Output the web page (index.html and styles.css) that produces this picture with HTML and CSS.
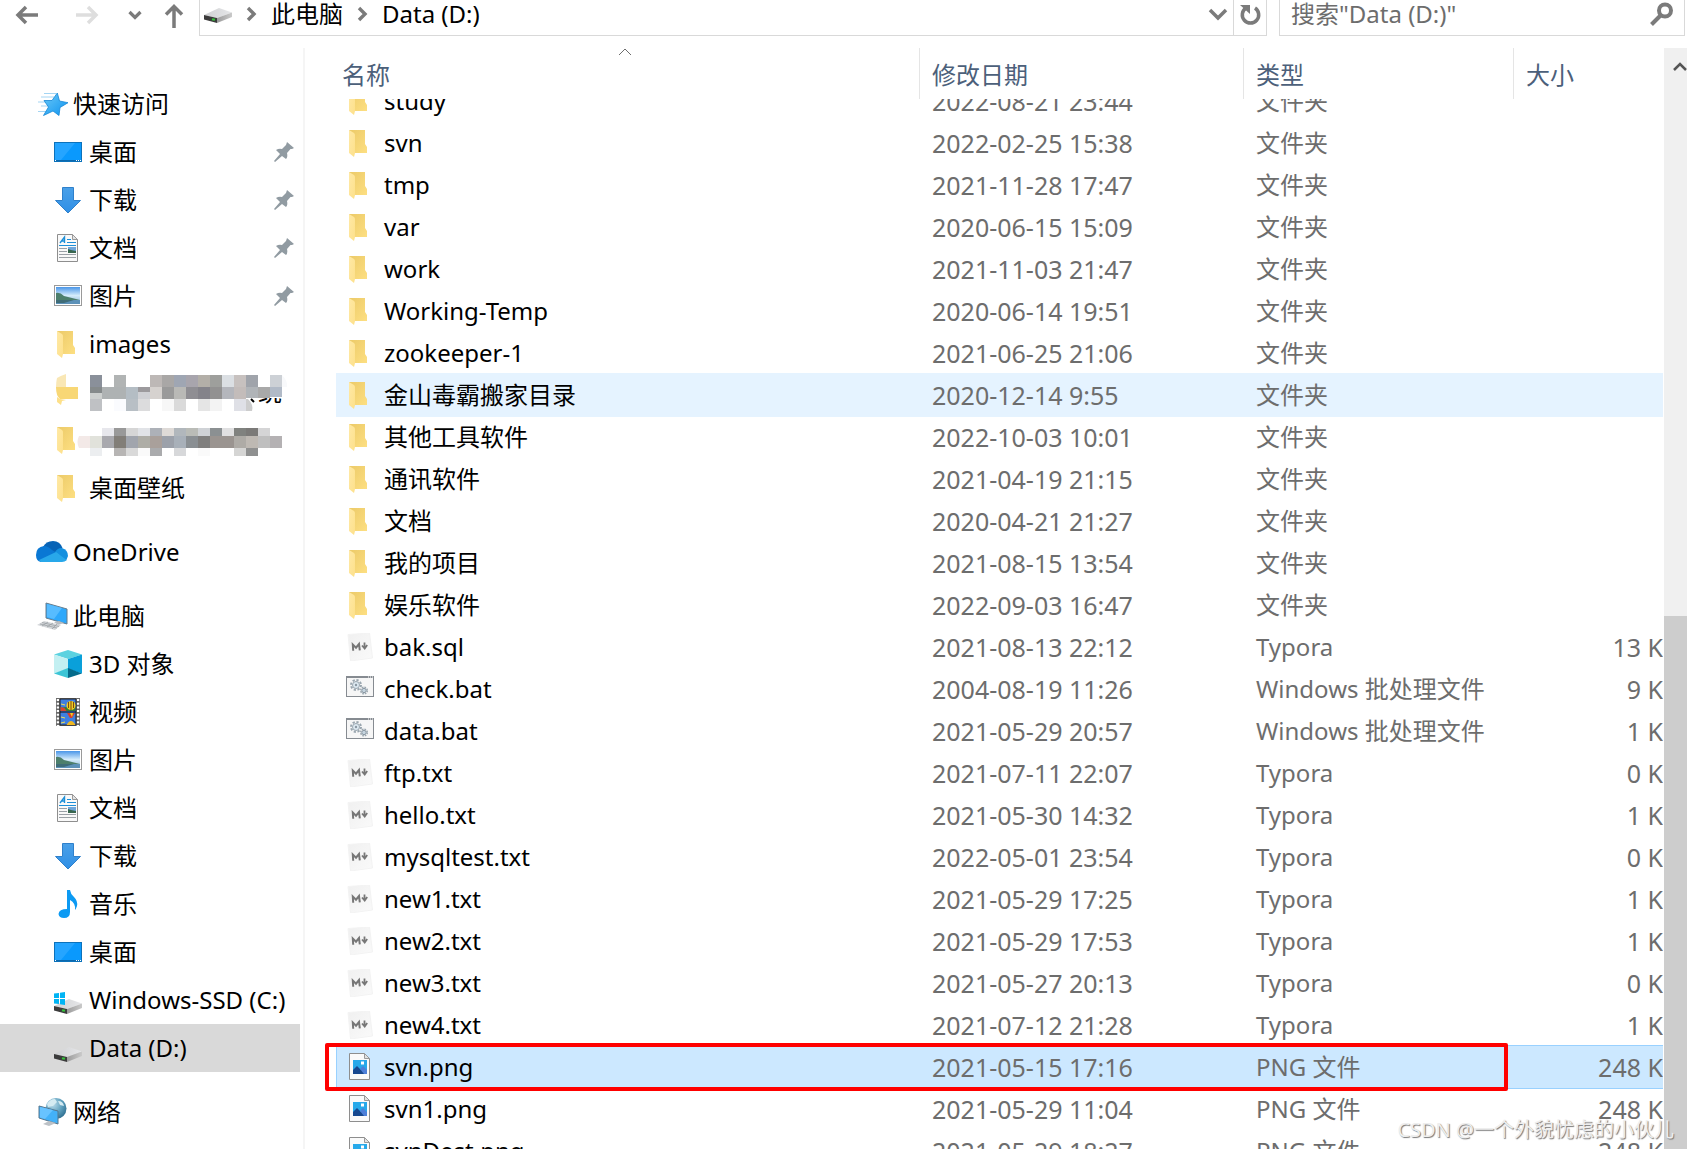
FILE: index.html
```html
<!DOCTYPE html>
<html lang="zh-CN">
  <head>
    <meta charset="UTF-8" />
    <meta name="viewport" content="width=device-width, initial-scale=1.0" />
    <title>Data (D:)</title>
    <link rel="stylesheet" href="styles.css">
  </head>
  <body>
    <svg class="sprite" width="0" height="0" aria-hidden="true">
      <defs>
        <linearGradient id="g-back" x1="0" y1="0" x2="1" y2="1"><stop offset="0" stop-color="#ecca68" /><stop offset="1" stop-color="#fddf82" /></linearGradient>
        <linearGradient id="g-flap" x1="0" y1="0" x2="1" y2="1"><stop offset="0" stop-color="#ffe9a6" /><stop offset="1" stop-color="#fde08a" /></linearGradient>
        <linearGradient id="g-sky" x1="0" y1="0" x2="0" y2="1"><stop offset="0" stop-color="#4a96e8" /><stop offset="0.5" stop-color="#d5ecfb" /><stop offset="1" stop-color="#8fb6d6" /></linearGradient>
        <linearGradient id="g-arrow" x1="0" y1="0" x2="0" y2="1"><stop offset="0" stop-color="#4aa0e8" /><stop offset="1" stop-color="#2f8fe6" /></linearGradient>
        <linearGradient id="g-star" x1="0" y1="0" x2="1" y2="1"><stop offset="0" stop-color="#6cc9f7" /><stop offset="1" stop-color="#0c93f0" /></linearGradient>
        <linearGradient id="g-top" x1="0" y1="0" x2="1" y2="0"><stop offset="0" stop-color="#cfd0d2" /><stop offset="1" stop-color="#e6e7e9" /></linearGradient>
        <linearGradient id="g-side" x1="0" y1="0" x2="1" y2="0"><stop offset="0" stop-color="#9b9b9b" /><stop offset="1" stop-color="#cacaca" /></linearGradient>
        <linearGradient id="g-paper" x1="0" y1="0" x2="1" y2="1"><stop offset="0" stop-color="#f0f0f0" /><stop offset="1" stop-color="#fafafa" /></linearGradient>
        <radialGradient id="g-globe" cx="0.35" cy="0.3" r="0.75"><stop offset="0" stop-color="#b9dbea" /><stop offset="0.6" stop-color="#5d9fbd" /><stop offset="1" stop-color="#2f6f91" /></radialGradient>
      </defs>
      <symbol id="folder" viewBox="0 0 28 28">
        <path d="M3 1h16v14l2 3v6H8z" fill="url(#g-back)" />
        <path d="M3 1l5 3q1 1 1 2v18l-1 4-5-4z" fill="url(#g-flap)" />
      </symbol>
      <symbol id="markdown" viewBox="0 0 28 28">
        <path d="M2 1.500L23.500 0l3 25-22 3z" fill="url(#g-paper)" stroke="#f3f3f3" />
        <path d="M7.200 17.800L6.800 11.500l3.200 3.200 3-3.700.8 6.300" fill="none" stroke="#777" stroke-width="2" />
        <path d="M18.500 9.500v6M16 12.500l2.700 3 2.500-3.500" fill="none" stroke="#777" stroke-width="1.800" />
      </symbol>
      <symbol id="batch" viewBox="0 0 28 28">
        <rect x="0.500" y="1.500" width="27" height="20" fill="#f6f6f6" stroke="#868b91" />
        <path d="M0 2h28" stroke="#868b91" stroke-width="2" />
        <path d="M22 2h1M24 2h1M26 2h1" stroke="#fff" />
        <circle cx="10" cy="10" r="5" fill="none" stroke="#9aa6af" stroke-width="2" stroke-dasharray="2.200 1.700" />
        <circle cx="10" cy="10" r="3.500" fill="#dde9f1" stroke="#9aa6af" />
        <circle cx="10" cy="10" r="1.200" fill="#8b98a3" />
        <circle cx="18" cy="15.500" r="3.300" fill="none" stroke="#9aa6af" stroke-width="1.500" stroke-dasharray="1.600 1" />
        <circle cx="18" cy="15.500" r="2.200" fill="#c5d4df" stroke="#8b98a3" />
      </symbol>
      <symbol id="image-file" viewBox="0 0 28 28">
        <path d="M3.500.5h15l5 5v21h-20z" fill="#fafafa" stroke="#8e8e8e" />
        <path d="M18.500.5v5h5z" fill="#e2e2e2" stroke="#9a9a9a" />
        <rect x="7" y="7" width="14" height="14" fill="#27a9ea" />
        <path d="M7 17l4-4 4 4 2-2 4 3v3H7z" fill="#17488f" />
        <path d="M14 16l3-3 4 4v4h-3z" fill="#4d7fd8" />
        <rect x="15" y="8.500" width="3" height="3" fill="#fff" />
      </symbol>
      <symbol id="desktop" viewBox="0 0 28 28">
        <rect x="0.500" y="4.500" width="27" height="19" fill="#0a99fd" stroke="#0c72bb" />
        <path d="M1 5h20L7 22H1z" fill="#25a5ff" />
        <path d="M1 22.500h26" stroke="#0c68ad" />
        <path d="M1 22.500h1M22 22.500h1M24 22.500h1M26 22.500h1" stroke="#fff" />
      </symbol>
      <symbol id="download" viewBox="0 0 28 28">
        <path d="M8.500 1.500h11v13h7L14 27 1.500 14.500h7z" fill="url(#g-arrow)" stroke="#2f80cb" />
      </symbol>
      <symbol id="document" viewBox="0 0 28 28">
        <path d="M3.500.5h15l5 5v22h-20z" fill="#f9f9f9" stroke="#8e8e8e" />
        <path d="M18.500.5v5h5z" fill="#e4e4e4" stroke="#9a9a9a" />
        <path d="M6 9l4.500-6v6M7.500 7H11" fill="none" stroke="#1d8fd8" stroke-width="1.400" />
        <path d="M13 5.500h4M13 8.500h9M5 11.500h17" stroke="#1d8fd8" />
        <path d="M5 14.500h8M5 17.500h8M5 20.500h17M5 23.500h17" stroke="#9aa0a6" />
        <rect x="14" y="13" width="8" height="6" fill="#6fa6da" />
        <path d="M14 15l3 1 5 1v2h-8z" fill="#38664f" />
      </symbol>
      <symbol id="picture" viewBox="0 0 28 28">
        <rect x="0.500" y="3.500" width="27" height="20" fill="#fff" stroke="#9a9a9a" />
        <rect x="2" y="5" width="24" height="17" fill="url(#g-sky)" />
        <path d="M2 11q4-1 8 3 8 2 16 4H2z" fill="#4d7f6c" />
        <path d="M2 18h24v4H2z" fill="#5c91b8" />
        <path d="M2 18h18l-10 3H2z" fill="#3f6c78" />
      </symbol>
      <symbol id="cube" viewBox="0 0 28 28">
        <path d="M0 4.500L14 0l14 4.500L14 9z" fill="#5bd2e0" />
        <path d="M0 4.500L14 9v10L0 23.500z" fill="#c3f0f2" />
        <path d="M28 4.500L14 9v10l14 4.500z" fill="#0aa0da" />
        <path d="M0 23.500L14 18v10z" fill="#3cc5d6" />
        <path d="M28 23.500L14 18v10z" fill="#046b8b" />
      </symbol>
      <symbol id="video" viewBox="0 0 28 28">
        <path d="M2 0h24v28H2z" fill="#6b6b6b" />
        <path d="M4 1v27M24 1v27" stroke="#fff" stroke-width="2.400" stroke-dasharray="2 1.700" />
        <path d="M6 1h16v26H6z" fill="#3f7fe0" stroke="#222" />
        <path d="M6.500 10l5-1 4 1 6-2v5h-15z" fill="#347c36" />
        <path d="M6.500 9l4 1 2 3h-6z" fill="#d9452c" />
        <path d="M6 14h16" stroke="#111" />
        <ellipse cx="17" cy="7.500" rx="4.500" ry="4.500" fill="#f0cd21" />
        <path d="M17 3v9M14.500 4v6M19.500 4v6" stroke="#7d4b12" />
        <path d="M13 15h8l-3 5h-2z" fill="#d7402a" />
        <path d="M16 15h3l-1 4z" fill="#f0cd21" />
        <path d="M12.500 27q4.500-8 9 0z" fill="#f0b821" />
        <path d="M7 6l4 1M7 19l4 1M7 25l4-1" stroke="#f5e050" />
      </symbol>
      <symbol id="music" viewBox="0 0 28 28">
        <path d="M13 0h3q.5 4 4 7 4 4 3 9-1 3-2 4 .8-7-5-10v12q0 6-6 6-5 0-5.500-4 .5-5 8.500-5z" fill="#0c9af3" />
      </symbol>
      <symbol id="drive" viewBox="0 0 28 28">
        <path d="M0 20l15-7 13 4.500L13 23z" fill="url(#g-top)" />
        <path d="M13 23l15-5.500V22L13 28z" fill="url(#g-side)" />
        <path d="M0 20l13 3v5L0 24.500z" fill="#3b3b3b" />
        <path d="M8 24.200l3 .6" stroke="#35c53b" stroke-width="2" />
      </symbol>
      <symbol id="system-drive" viewBox="0 0 28 28">
        <use href="#drive" />
        <path d="M0 7.500l5-.6v5H0zM6 6.800L11 6v6H6zM0 13h5v5l-5-.6zM6 13h5v6l-5-.8z" fill="#00b4f4" />
      </symbol>
      <symbol id="star" viewBox="0 0 32 28">
        <path d="M8 3.500h12M5 7h13M2 12h8M5 16h7M2 21.500h9" stroke="#a4d5f3" />
        <path d="M21.300 3l2.200 8 8.500 1.700-8 4.800-1 8-6-4.500-9.500 4.500 5-8.500L8 10.500h8z" fill="url(#g-star)" stroke="#1486d6" stroke-width="0.800" />
      </symbol>
      <symbol id="cloud" viewBox="0 0 32 28">
        <path d="M7 9q3-6 10-6 7 0 9.500 7L16 18 6 12z" fill="#0763b6" />
        <path d="M0 17q0-8 8-9 4 0 8 4l5 3L5 24q-5-1-5-7z" fill="#0a78d4" />
        <path d="M19 14q3-4.500 7-4 6 2 6 8l-2 5z" fill="#1490df" />
        <path d="M3 22l17-8 10.500 8q-1.500 2-4.500 2H6q-2 0-3-2z" fill="#28a8ea" />
      </symbol>
      <symbol id="computer" viewBox="0 0 32 28">
        <path d="M10 1l21 6v15l-21-6z" fill="#2ea8fb" stroke="#697d8c" />
        <path d="M11 2l15 4-8 11-7-2z" fill="#57bcff" />
        <path d="M18 20l5-1 5 2-6 2z" fill="#b8bdc2" />
        <path d="M8 19l17 4-6 5-18-5z" fill="#d3d6d9" />
        <path d="M6 20.500l17 4M4 22l17 4M12 20l-6 4M17 21l-6 4M21 22l-5 5" stroke="#959b9f" stroke-width="0.700" />
      </symbol>
      <symbol id="network" viewBox="0 0 32 28">
        <circle cx="20" cy="10.500" r="10.500" fill="url(#g-globe)" />
        <path d="M11 6q3-5 8-5l2 3-4 4-5 1zM22 3q5 0 6 5l-4-1z" fill="#d5ebf2" />
        <path d="M3 8l19 5v13L3 20z" fill="#43b1f8" stroke="#56768d" />
        <path d="M4 9l13 3-8 9-5-1.500z" fill="#68c3ff" />
        <path d="M7 26l6-3 7 2-7 3z" fill="#bcc1c6" />
      </symbol>
      <symbol id="pin" viewBox="0 0 20 20">
        <path d="M13 0l7 6-2 1-1.500 0-3.500 4q1 4-1 6l-4-3-7 6-1-1 6-7-4-4q3-2 6-1l4-4z" fill="#919ba2" />
      </symbol>
      <symbol id="chevron" viewBox="0 0 12 16">
        <path d="M3 2l6 6-6 6" fill="none" stroke="#7b7b7b" stroke-width="3.400" />
      </symbol>
    </svg>

    <header class="toolbar">
      <nav class="history" aria-label="导航">
        <button class="history__button" aria-label="后退"><svg width="24" height="24"><path d="M23 12H3M11 4l-8 8 8 8" fill="none" stroke="#7b7b7b" stroke-width="3.500" /></svg></button>
        <button class="history__button" aria-label="前进"><svg width="24" height="24"><path d="M1 12h20M13 4l8 8-8 8" fill="none" stroke="#dedede" stroke-width="3.500" /></svg></button>
        <button class="history__button history__button_small" aria-label="最近"><svg width="14" height="24"><path d="M1.500 9l5.500 5.500L12.500 9" fill="none" stroke="#7b7b7b" stroke-width="3.200" /></svg></button>
        <button class="history__button" aria-label="上移"><svg width="24" height="26"><path d="M12 26V5M4 12.500L12 4.500l8 8" fill="none" stroke="#7b7b7b" stroke-width="3.500" /></svg></button>
      </nav>
      <div class="address">
        <svg class="icon"><use href="#drive" y="-5" /></svg>
        <svg class="crumb-arrow"><use href="#chevron" /></svg>
        <a class="crumb" href="#">此电脑</a>
        <svg class="crumb-arrow"><use href="#chevron" /></svg>
        <a class="crumb" href="#">Data (D:)</a>
        <button class="address__drop" aria-label="历史地址"><svg width="20" height="14"><path d="M2 3l8 8 8-8" fill="none" stroke="#7b7b7b" stroke-width="3.500" /></svg></button>
        <button class="address__refresh" aria-label="刷新"><svg width="24" height="24"><path d="M17 5a8.200 8.200 0 1 1-9 0" fill="none" stroke="#7b7b7b" stroke-width="3.500" /><path d="M2 2h10v9z" fill="#7b7b7b" /></svg></button>
      </div>
      <div class="search">
        <input class="search__input" type="search" aria-label="搜索" placeholder='搜索"Data (D:)"'>
        <svg width="24" height="24"><circle cx="16" cy="8.500" r="6" fill="none" stroke="#7b7b7b" stroke-width="4" /><path d="M12 13l-9.500 9.500" stroke="#7b7b7b" stroke-width="4" /></svg>
      </div>
    </header>

    <main>
      <aside class="sidebar">
        <ul class="tree">
          <li><a class="tree__item tree__item_root" href="#"><svg class="icon"><use href="#star" /></svg>快速访问</a></li>
          <li><a class="tree__item" href="#"><svg class="icon"><use href="#desktop" /></svg>桌面<svg class="pin"><use href="#pin" /></svg></a></li>
          <li><a class="tree__item" href="#"><svg class="icon"><use href="#download" /></svg>下载<svg class="pin"><use href="#pin" /></svg></a></li>
          <li><a class="tree__item" href="#"><svg class="icon"><use href="#document" /></svg>文档<svg class="pin"><use href="#pin" /></svg></a></li>
          <li><a class="tree__item" href="#"><svg class="icon"><use href="#picture" /></svg>图片<svg class="pin"><use href="#pin" /></svg></a></li>
          <li><a class="tree__item" href="#"><svg class="icon"><use href="#folder" /></svg>images</a></li>
          <li>
            <a class="tree__item tree__item_masked" href="#">
              <svg class="icon"><path d="M3 0q3-2 9-4V9H2q0-5 1-9z" fill="#f9e7b5" /><path d="M2 9h22v12H6q-4-3-4-12z" fill="#f8d775" /><path d="M3 19l3 2 6 1-4 1-1 4-4-3z" fill="#fde08a" /></svg>
              <span class="tail">统</span>
              <svg class="mosaic" width="216" height="36">
                <path d="M0 0h192v23H0zM0 20h160v16H0z" fill="#fff" />
                <path d="M0 0h12v12H0z" fill="#8a909a" /><path d="M24 0h12v12H24z" fill="#b1b4b4" /><path d="M60 0h12v12H60z" fill="#bdb8b6" /><path d="M72 0h12v12H72z" fill="#a9a7a6" />
                <path d="M84 0h12v12H84z" fill="#9fa6b3" /><path d="M96 0h12v12H96z" fill="#a8a5ad" /><path d="M108 0h12v12h-12z" fill="#b3afa8" /><path d="M120 0h12v12h-12z" fill="#9e9f9c" />
                <path d="M132 0h12v12h-12z" fill="#dbdfe3" /><path d="M144 0h12v12h-12z" fill="#c7c1bf" /><path d="M156 0h12v12h-12z" fill="#a0a4ab" /><path d="M180 0h12v12h-12z" fill="#cdd1d6" /><path d="M192 0q6 6 5 12h-5z" fill="#f8f9fb" />
                <path d="M0 12h12v6H0z" fill="#858a8b" /><path d="M0 18h12v6H0z" fill="#cdd0cf" /><path d="M12 12h24v12H12z" fill="#aeb2b3" /><path d="M36 12h12v12H36z" fill="#b4bdc4" /><path d="M48 12h12v5H48z" fill="#9c9a9d" /><path d="M48 17h12v7H48z" fill="#cfd0d4" />
                <path d="M60 12h12v12H60z" fill="#d6d2cf" /><path d="M72 12h12v12H72z" fill="#9a9a9a" /><path d="M84 12h12v12H84z" fill="#b9b9b6" /><path d="M96 12h12v12H96z" fill="#8f8e93" /><path d="M108 12h12v12h-12z" fill="#84838a" />
                <path d="M120 12h12v12h-12z" fill="#929191" /><path d="M132 12h12v12h-12z" fill="#b4b6bc" /><path d="M144 12h12v12h-12z" fill="#c3bcba" /><path d="M156 12h12v11h-12z" fill="#b0b4b8" /><path d="M168 12h12v11h-12z" fill="#a9a9a9" /><path d="M180 12h12v10h-12z" fill="#b1bac7" />
                <path d="M0 24h12v12H0z" fill="#bfc1c4" /><path d="M24 24h12v12H24z" fill="#fafbfe" /><path d="M36 24h12v12H36z" fill="#b8bfc5" /><path d="M48 24h12v12H48z" fill="#dcdcdd" /><path d="M72 24h12v12H72z" fill="#f7f7f7" />
                <path d="M84 24h12v12H84z" fill="#dadada" /><path d="M108 24h12v12h-12z" fill="#e5e5e5" /><path d="M120 24h12v12h-12z" fill="#f3f3f3" /><path d="M144 24h12v12h-12z" fill="#dfe0e6" /><path d="M156 24h2q6 6 4 12h-6z" fill="#cdcdcd" />
                <path d="M161 24l3 3" stroke="#000" stroke-width="2" />
              </svg>
            </a>
          </li>
          <li>
            <a class="tree__item tree__item_masked" href="#">
              <svg class="icon"><use href="#folder" /></svg>
              <svg class="mosaic mosaic_wide" width="216" height="28">
                <path d="M25 0h12v8H25z" fill="#e7e7ec" /><path d="M37 0h12v8H37z" fill="#999" /><path d="M49 0h12v8H49z" fill="#d6d6d6" /><path d="M61 0h12v8H61z" fill="#e1e3e7" /><path d="M73 0h12v8H73z" fill="#adb1b8" />
                <path d="M85 0h12v8H85z" fill="#dedad7" /><path d="M97 0h12v8H97z" fill="#b1b7bc" /><path d="M109 0h12v8h-12z" fill="#babcb7" /><path d="M121 0h12v8h-12z" fill="#cfd2d6" /><path d="M133 0h12v8h-12z" fill="#8b9092" />
                <path d="M145 0h12v8h-12z" fill="#e0e0e1" /><path d="M157 0h12v8h-12z" fill="#80827f" /><path d="M169 0h12v8h-12z" fill="#7b7a78" /><path d="M181 0h12v8h-12z" fill="#d5d5d6" />
                <path d="M13 8v12H2q-3-6 0-12z" fill="#f3e9e7" /><path d="M13 8h12v12H13z" fill="#e1e2db" /><path d="M25 8h12v12H25z" fill="#a9a9ae" /><path d="M37 8h12v12H37z" fill="#827e78" /><path d="M49 8h12v12H49z" fill="#a1a5ad" />
                <path d="M61 8h12v12H61z" fill="#aeada6" /><path d="M73 8h12v12H73z" fill="#a9a09b" /><path d="M85 8h12v12H85z" fill="#9ca1aa" /><path d="M97 8h12v12H97z" fill="#a8b0b9" /><path d="M109 8h12v12h-12z" fill="#8a8f93" />
                <path d="M121 8h12v12h-12z" fill="#807f7e" /><path d="M133 8h24v12h-24z" fill="#9a9490" /><path d="M157 8h12v12h-12z" fill="#aeaba6" /><path d="M169 8h12v12h-12z" fill="#beb9b3" /><path d="M181 8h12v12h-12z" fill="#bfbfbf" /><path d="M193 8h12v12h-12z" fill="#b4b1b3" />
                <path d="M13 20h12v8H13z" fill="#eceef0" /><path d="M37 20h12v8H37z" fill="#b7b5b4" /><path d="M49 20h12v8H49z" fill="#d9d9d9" /><path d="M61 20h12v8H61z" fill="#fafafa" /><path d="M73 20h12v8H73z" fill="#aaabad" />
                <path d="M97 20h12v8H97z" fill="#d7d8da" /><path d="M121 20h12v8h-12z" fill="#fafafa" /><path d="M157 20h12v8h-12z" fill="#d5d5d4" /><path d="M169 20h12v8h-12z" fill="#8f9090" />
              </svg>
            </a>
          </li>
          <li><a class="tree__item" href="#"><svg class="icon"><use href="#folder" /></svg>桌面壁纸</a></li>
        </ul>
        <ul class="tree">
          <li><a class="tree__item tree__item_root" href="#"><svg class="icon"><use href="#cloud" /></svg>OneDrive</a></li>
        </ul>
        <ul class="tree">
          <li><a class="tree__item tree__item_root" href="#"><svg class="icon"><use href="#computer" /></svg>此电脑</a></li>
          <li><a class="tree__item" href="#"><svg class="icon"><use href="#cube" /></svg>3D 对象</a></li>
          <li><a class="tree__item" href="#"><svg class="icon"><use href="#video" /></svg>视频</a></li>
          <li><a class="tree__item" href="#"><svg class="icon"><use href="#picture" /></svg>图片</a></li>
          <li><a class="tree__item" href="#"><svg class="icon"><use href="#document" /></svg>文档</a></li>
          <li><a class="tree__item" href="#"><svg class="icon"><use href="#download" /></svg>下载</a></li>
          <li><a class="tree__item" href="#"><svg class="icon"><use href="#music" /></svg>音乐</a></li>
          <li><a class="tree__item" href="#"><svg class="icon"><use href="#desktop" /></svg>桌面</a></li>
          <li><a class="tree__item" href="#"><svg class="icon"><use href="#system-drive" /></svg>Windows-SSD (C:)</a></li>
          <li><a class="tree__item selected" href="#"><svg class="icon"><use href="#drive" /></svg>Data (D:)</a></li>
        </ul>
        <ul class="tree">
          <li><a class="tree__item tree__item_root" href="#"><svg class="icon"><use href="#network" /></svg>网络</a></li>
        </ul>
      </aside>

      <section class="files">
        <div class="columns">
          <button class="columns__button">名称<svg class="sort" width="14" height="8"><path d="M1 7l6-6 6 6" fill="none" stroke="#6d6d6d" /></svg></button>
          <button class="columns__button">修改日期</button>
          <button class="columns__button">类型</button>
          <button class="columns__button">大小</button>
        </div>
        <div class="list">
          <table>
            <colgroup><col class="col-name"><col class="col-date"><col class="col-type"><col class="col-size"></colgroup>
            <tbody>
              <tr><td><svg class="icon"><use href="#folder" /></svg>study</td><td>2022-08-21 23:44</td><td>文件夹</td><td></td></tr>
              <tr><td><svg class="icon"><use href="#folder" /></svg>svn</td><td>2022-02-25 15:38</td><td>文件夹</td><td></td></tr>
              <tr><td><svg class="icon"><use href="#folder" /></svg>tmp</td><td>2021-11-28 17:47</td><td>文件夹</td><td></td></tr>
              <tr><td><svg class="icon"><use href="#folder" /></svg>var</td><td>2020-06-15 15:09</td><td>文件夹</td><td></td></tr>
              <tr><td><svg class="icon"><use href="#folder" /></svg>work</td><td>2021-11-03 21:47</td><td>文件夹</td><td></td></tr>
              <tr><td><svg class="icon"><use href="#folder" /></svg>Working-Temp</td><td>2020-06-14 19:51</td><td>文件夹</td><td></td></tr>
              <tr><td><svg class="icon"><use href="#folder" /></svg>zookeeper-1</td><td>2021-06-25 21:06</td><td>文件夹</td><td></td></tr>
              <tr class="hovered"><td><svg class="icon"><use href="#folder" /></svg>金山毒霸搬家目录</td><td>2020-12-14 9:55</td><td>文件夹</td><td></td></tr>
              <tr><td><svg class="icon"><use href="#folder" /></svg>其他工具软件</td><td>2022-10-03 10:01</td><td>文件夹</td><td></td></tr>
              <tr><td><svg class="icon"><use href="#folder" /></svg>通讯软件</td><td>2021-04-19 21:15</td><td>文件夹</td><td></td></tr>
              <tr><td><svg class="icon"><use href="#folder" /></svg>文档</td><td>2020-04-21 21:27</td><td>文件夹</td><td></td></tr>
              <tr><td><svg class="icon"><use href="#folder" /></svg>我的项目</td><td>2021-08-15 13:54</td><td>文件夹</td><td></td></tr>
              <tr><td><svg class="icon"><use href="#folder" /></svg>娱乐软件</td><td>2022-09-03 16:47</td><td>文件夹</td><td></td></tr>
              <tr><td><svg class="icon"><use href="#markdown" /></svg>bak.sql</td><td>2021-08-13 22:12</td><td>Typora</td><td>13 K</td></tr>
              <tr><td><svg class="icon"><use href="#batch" /></svg>check.bat</td><td>2004-08-19 11:26</td><td>Windows 批处理文件</td><td>9 K</td></tr>
              <tr><td><svg class="icon"><use href="#batch" /></svg>data.bat</td><td>2021-05-29 20:57</td><td>Windows 批处理文件</td><td>1 K</td></tr>
              <tr><td><svg class="icon"><use href="#markdown" /></svg>ftp.txt</td><td>2021-07-11 22:07</td><td>Typora</td><td>0 K</td></tr>
              <tr><td><svg class="icon"><use href="#markdown" /></svg>hello.txt</td><td>2021-05-30 14:32</td><td>Typora</td><td>1 K</td></tr>
              <tr><td><svg class="icon"><use href="#markdown" /></svg>mysqltest.txt</td><td>2022-05-01 23:54</td><td>Typora</td><td>0 K</td></tr>
              <tr><td><svg class="icon"><use href="#markdown" /></svg>new1.txt</td><td>2021-05-29 17:25</td><td>Typora</td><td>1 K</td></tr>
              <tr><td><svg class="icon"><use href="#markdown" /></svg>new2.txt</td><td>2021-05-29 17:53</td><td>Typora</td><td>1 K</td></tr>
              <tr><td><svg class="icon"><use href="#markdown" /></svg>new3.txt</td><td>2021-05-27 20:13</td><td>Typora</td><td>0 K</td></tr>
              <tr><td><svg class="icon"><use href="#markdown" /></svg>new4.txt</td><td>2021-07-12 21:28</td><td>Typora</td><td>1 K</td></tr>
              <tr class="selected"><td><svg class="icon"><use href="#image-file" /></svg>svn.png</td><td>2021-05-15 17:16</td><td>PNG 文件</td><td>248 K<span class="marker"></span></td></tr>
              <tr><td><svg class="icon"><use href="#image-file" /></svg>svn1.png</td><td>2021-05-29 11:04</td><td>PNG 文件</td><td>248 K</td></tr>
              <tr><td><svg class="icon"><use href="#image-file" /></svg>svnDest.png</td><td>2021-05-29 18:27</td><td>PNG 文件</td><td>248 K</td></tr>
            </tbody>
          </table>
        </div>
      </section>

      <div class="scrollbar">
        <svg width="14" height="9"><path d="M1 8l6-6 6 6" fill="none" stroke="#555" stroke-width="2.500" /></svg>
        <div class="scrollbar__thumb"></div>
      </div>
    </main>
    <p class="watermark">CSDN @一个外貌忧虑的小伙儿</p>
  </body>
</html>
```
FILE: styles.css
```css
:root {
  --text-color: #000;
  --muted-color: #6d6d6d;
  --header-color: #4c607a;
  --line-color: #d9d9d9;
  --column-line-color: #e5e5e5;
  --hover-color: #e5f3ff;
  --select-color: #cce8ff;
  --select-line-color: #99d1ff;
}

* {
  box-sizing: border-box;
  margin: 0;
  padding: 0;
}
body {
  height: 100vh;
  display: flex;
  flex-direction: column;
  overflow: hidden;
  position: relative;
  background-color: #fff;
  color: var(--text-color);
  font-family: "Noto Sans", "Noto Sans CJK SC", sans-serif;
  font-size: 24px;
  line-height: 32px;
}
button {
  border: none;
  background: none;
  font: inherit;
  color: inherit;
}
a {
  color: inherit;
  text-decoration: none;
}
ul {
  list-style: none;
}
.sprite {
  position: absolute;
}
.icon {
  width: 28px;
  height: 28px;
  flex: none;
  overflow: visible;
}

/* toolbar */
.toolbar {
  display: flex;
  height: 36px;
  flex: none;
  padding-right: 2px;
}
.history {
  display: flex;
  align-items: center;
  width: 199px;
  padding: 0 13px 6px 15px;
  justify-content: space-between;
}
.history__button {
  display: flex;
}
.history__button:nth-child(2) {
  margin-left: 16px;
}
.history__button_small {
  margin-left: 8px;
}
.address {
  flex: 1;
  display: flex;
  align-items: center;
  border: solid 1px var(--line-color);
  border-top: none;
  padding: 0 0 8px 4px;
}
.crumb-arrow {
  width: 12px;
  height: 16px;
  margin: 0 14px 0 13px;
}
.address__drop {
  display: flex;
  margin-left: auto;
  padding: 0 5px;
}
.address__refresh {
  height: 35px;
  display: flex;
  align-items: center;
  margin-bottom: -8px;
  padding: 0 4px 6px;
  border-left: solid 1px var(--line-color);
}
.search {
  display: flex;
  align-items: center;
  width: 406px;
  margin-left: 12px;
  border: solid 1px var(--line-color);
  border-top: none;
  padding: 0 11px 8px;
}
.search__input {
  flex: 1;
  min-width: 0;
  border: none;
  outline: none;
  background: none;
  font: inherit;
}
.search__input::placeholder {
  color: var(--muted-color);
  opacity: 1;
}

main {
  flex: 1;
  min-height: 0;
  display: flex;
  padding-top: 12px;
}

/* sidebar */
.sidebar {
  width: 305px;
  flex: none;
  border-right: solid 2px #f5f5f5;
  padding: 32px 3px 0 0;
  display: flex;
  flex-direction: column;
  gap: 16px;
}
.tree__item {
  display: flex;
  align-items: center;
  gap: 7px;
  height: 48px;
  padding: 0 6px 0 54px;
  white-space: nowrap;
  position: relative;
}
.tree__item_root {
  padding-left: 36px;
  gap: 5px;
}
.tree__item_root .icon {
  width: 32px;
}
.tree__item.selected {
  width: 300px;
  background-color: #d9d9d9;
}
.pin {
  width: 20px;
  height: 20px;
  margin-left: auto;
}
.tail {
  margin-left: auto;
  padding-right: 12px;
}
.mosaic {
  position: absolute;
  left: 90px;
  top: 7px;
}
.mosaic_wide {
  left: 77px;
  top: 12px;
}

/* file list */
.files {
  flex: 1;
  min-width: 0;
  display: flex;
  flex-direction: column;
  padding: 0 1px 0 25px;
}
.columns {
  display: grid;
  grid-template-columns: 1fr 324px 270px 149px;
  height: 51px;
  flex: none;
  color: var(--header-color);
}
.columns__button {
  position: relative;
  text-align: left;
  padding: 2px 12px 0;
  border-right: solid 1px var(--column-line-color);
}
.columns__button:last-child {
  border-right: none;
}
.sort {
  position: absolute;
  top: 0;
  left: 50%;
  margin-left: -7px;
}
.list {
  flex: 1;
  min-height: 0;
  /* room for the frame round the selected row */
  margin-left: -12px;
  padding-left: 19px;
  overflow: hidden;
}
/* scrolled so that the first row is partly under the header */
table {
  width: 100%;
  margin-top: -19px;
  table-layout: fixed;
  border-spacing: 0;
}
.col-date {
  width: 324px;
}
.col-type {
  width: 270px;
}
.col-size {
  width: 149px;
}
tr {
  position: relative;
}
td {
  height: 42px;
  padding-left: 12px;
  color: var(--muted-color);
  white-space: nowrap;
}
td:first-child {
  display: flex;
  align-items: center;
  gap: 10px;
  padding-left: 9px;
  color: var(--text-color);
}
td:nth-child(2),
td:last-child {
  font-size: 25px;
}
td:last-child {
  text-align: right;
}
.hovered {
  background-color: var(--hover-color);
  box-shadow: 0 0 0 1px var(--hover-color);
}
tr.selected {
  background-color: var(--select-color);
  box-shadow: 0 0 0 1px var(--select-line-color);
}
.marker {
  position: absolute;
  top: -3px;
  bottom: -3px;
  left: -12px;
  right: 155px;
  border: solid 4px #f00;
  border-radius: 2px;
}

.scrollbar {
  width: 23px;
  flex: none;
  display: flex;
  flex-direction: column;
  align-items: flex-end;
  justify-content: space-between;
  padding-top: 14px;
  background-color: #f0f0f0;
}
.scrollbar__thumb {
  width: 100%;
  height: 49%;
  background-color: #cdcdcd;
}
.watermark {
  position: absolute;
  right: 13px;
  bottom: 3px;
  font-size: 20px;
  color: #eee;
  text-shadow: 1px 1px 1px #777;
}
```
